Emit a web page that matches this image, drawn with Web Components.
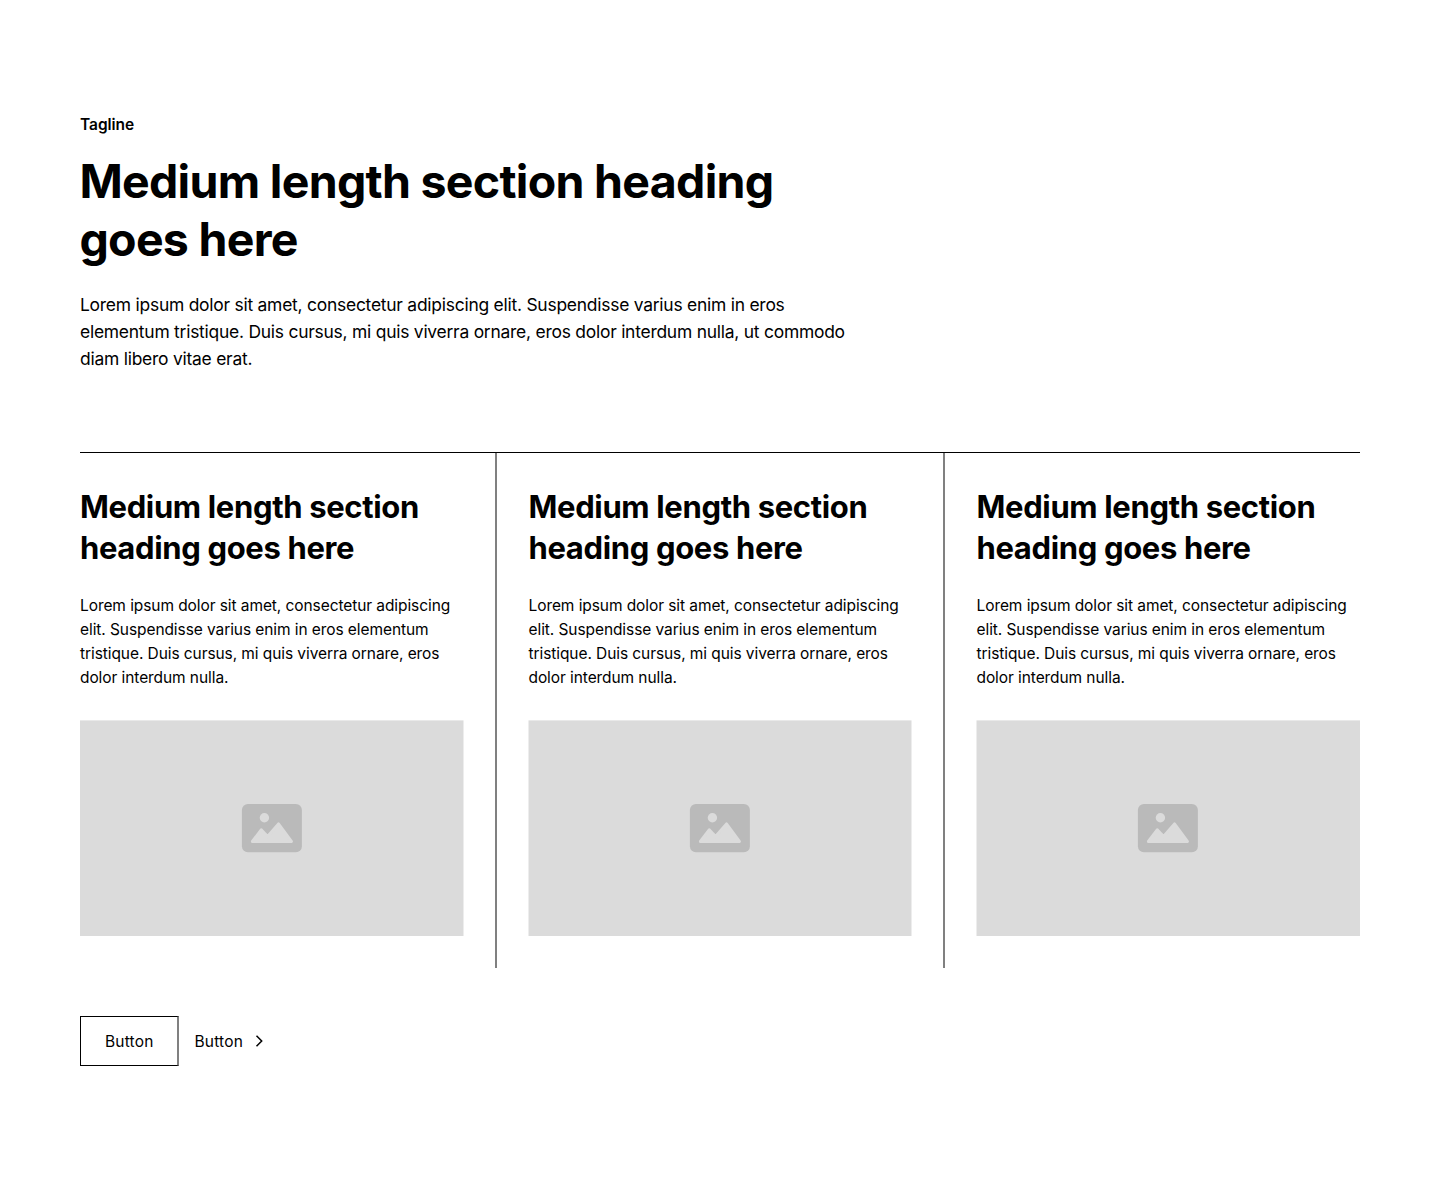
<!DOCTYPE html>
<html lang="en">
<head>
    <meta charset="utf-8">
    <title>Section</title>
    <style>
        body {
            margin: 0;
            background: #fff;
            color: #000;
            font-family: Inter, sans-serif;
            font-size: 15.5px;
            line-height: 24px;
        }
    </style>
</head>
<body>

<template id="section-header-template">
    <style>
        :host {
            display: flex;
            flex-direction: column;
            width: 768px;
            padding-top: 0.5px;
        }

        .tagline {
            font-weight: 600;
            letter-spacing: -0.05px;
            margin-bottom: 16.8px;
        }

        h2 {
            margin: 0 0 22.5px -0.6px;
            font-size: 46.5px;
            font-weight: 700;
            line-height: 57.6px;
            letter-spacing: -0.71px;
        }

        p {
            margin: 0;
            font-size: 17.45px;
            line-height: 27px;
            letter-spacing: -0.24px;
        }
    </style>
    <div class="tagline"><slot name="tagline"></slot></div>
    <h2><slot name="heading"></slot></h2>
    <p><slot></slot></p>
</template>

<template id="image-placeholder-template">
    <style>
        :host {
            display: block;
            height: 216px;
        }

        svg {
            display: block;
            width: 100%;
            height: 100%;
        }

        .bg {
            x: var(--image-x, 0px);
            width: var(--image-width, 383.5px);
        }
    </style>
    <svg viewBox="0 0 384 216">
        <rect class="bg" y="0.4" height="215.6" fill="#dbdbdb"/>
        <g class="icon">
            <rect x="161.9" y="84.1" width="60" height="48.2" rx="6" fill="#bababa"/>
            <circle cx="184.4" cy="97.7" r="4.7" fill="#dbdbdb"/>
            <path d="M172.4 121.5 L181.2 109.8 L187.6 116.6 L198.5 103.9 L211.4 121.5 Z" fill="#dbdbdb" stroke="#dbdbdb" stroke-width="3" stroke-linejoin="round"/>
        </g>
    </svg>
</template>

<template id="feature-column-template">
    <style>
        :host {
            display: flex;
            flex-direction: column;
            padding: 33.5px 0 32px;
        }

        h3 {
            margin: 0 0 25.7px;
            padding-left: var(--image-x, 0px);
            font-size: 31px;
            font-weight: 700;
            line-height: 41px;
            letter-spacing: -0.35px;
        }

        p {
            margin: 0 0 29.8px;
            padding-left: var(--image-x, 0px);
            letter-spacing: -0.08px;
        }
    </style>
    <h3><slot name="heading"></slot></h3>
    <p><slot></slot></p>
    <image-placeholder></image-placeholder>
</template>

<template id="feature-grid-template">
    <style>
        :host {
            display: grid;
            grid-template-columns: 384px 2px 384px 2px 384px;
            column-gap: 31px;
            margin-top: 80px;
            border-top: 1px solid #000;
        }

        ::slotted(hr) {
            margin: 0;
            border: 0;
            background: #808080;
        }

        ::slotted(feature-column:nth-of-type(n + 2)) {
            --image-x: 0.5px;
            --image-width: 383px;
        }

        ::slotted(feature-column:last-of-type) {
            --image-width: 383.5px;
        }
    </style>
    <slot></slot>
</template>

<template id="action-button-template">
    <style>
        :host {
            display: inline-flex;
        }

        button {
            display: flex;
            align-items: center;
            gap: 8px;
            box-sizing: border-box;
            width: 99px;
            height: 50px;
            padding: 2px 0 0 24px;
            border: 1px solid #000;
            border-right: 2px solid #808080;
            background: none;
            color: inherit;
            font: inherit;
            letter-spacing: 0.2px;
        }

        :host([variant="link"]) button {
            width: auto;
            padding: 2px 0 0;
            border: 0;
        }

        svg {
            display: none;
        }

        :host([variant="link"]) svg {
            display: block;
        }
    </style>
    <button>
        <slot></slot>
        <svg width="16" height="16" viewBox="0 0 16 16" fill="none" stroke="#000" stroke-width="1.5">
            <path d="M5.5 1.8 L10.7 7 L5.5 12.2"/>
        </svg>
    </button>
</template>

<template id="layout-section-template">
    <style>
        :host {
            display: block;
            padding: 112px 80px;
        }

        .actions {
            display: flex;
            gap: 15.5px;
            margin-top: 48px;
        }
    </style>
    <slot></slot>
    <div class="actions"><slot name="actions"></slot></div>
</template>

<layout-section>
    <section-header>
        <span slot="tagline">Tagline</span>
        <span slot="heading">Medium length section heading goes here</span>
        Lorem ipsum dolor sit amet, consectetur adipiscing elit. Suspendisse varius enim in eros elementum tristique. Duis cursus, mi quis viverra ornare, eros dolor interdum nulla, ut commodo diam libero vitae erat.
    </section-header>
    <feature-grid>
        <feature-column>
            <span slot="heading">Medium length section heading goes here</span>
            Lorem ipsum dolor sit amet, consectetur adipiscing elit. Suspendisse varius enim in eros elementum tristique. Duis cursus, mi quis viverra ornare, eros dolor interdum nulla.
        </feature-column>
        <hr>
        <feature-column>
            <span slot="heading">Medium length section heading goes here</span>
            Lorem ipsum dolor sit amet, consectetur adipiscing elit. Suspendisse varius enim in eros elementum tristique. Duis cursus, mi quis viverra ornare, eros dolor interdum nulla.
        </feature-column>
        <hr>
        <feature-column>
            <span slot="heading">Medium length section heading goes here</span>
            Lorem ipsum dolor sit amet, consectetur adipiscing elit. Suspendisse varius enim in eros elementum tristique. Duis cursus, mi quis viverra ornare, eros dolor interdum nulla.
        </feature-column>
    </feature-grid>
    <action-button slot="actions">Button</action-button>
    <action-button slot="actions" variant="link">Button</action-button>
</layout-section>

<script>
    class TemplateElement extends HTMLElement {
        constructor() {
            super();
            const template = document.getElementById(this.localName + '-template');
            this.attachShadow({ mode: 'open' });
            this.shadowRoot.appendChild(template.content.cloneNode(true));
        }
    }

    customElements.define('image-placeholder', class extends TemplateElement {});
    customElements.define('section-header', class extends TemplateElement {});
    customElements.define('feature-column', class extends TemplateElement {});
    customElements.define('feature-grid', class extends TemplateElement {});
    customElements.define('action-button', class extends TemplateElement {});
    customElements.define('layout-section', class extends TemplateElement {});
</script>
</body>
</html>
